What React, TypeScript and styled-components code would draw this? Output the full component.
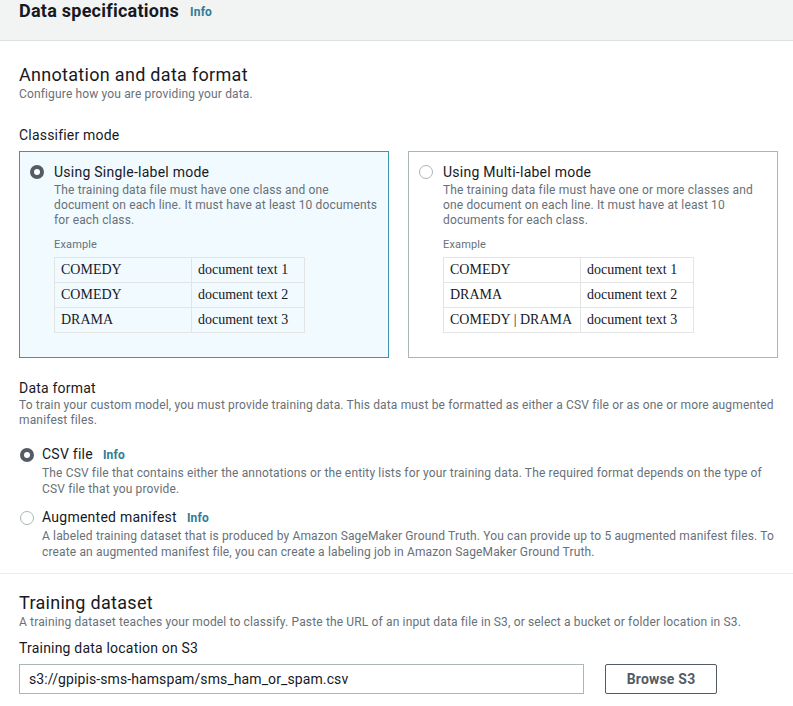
import React from "react";
import styled, { createGlobalStyle } from "styled-components";

const Global = createGlobalStyle`
  html, body { margin: 0; padding: 0; background: #ffffff; }
  body { font-family: Roboto, "Noto Sans", Arial, sans-serif; color: #16191f; }
  * { box-sizing: border-box; }
`;

const Page = styled.div`
  width: 793px;
  min-height: 706px;
  background: #ffffff;
  overflow: hidden;
`;

const Header = styled.header`
  height: 41px;
  background: #f2f3f3;
  border-bottom: 1px solid #dde1e1;
  padding: 0 19px;
  display: flex;
  align-items: flex-start;
  gap: 11px;
`;

const HeaderTitle = styled.h1`
  margin: 0;
  font-size: 18px;
  line-height: 22px;
  font-weight: 700;
  letter-spacing: 0.25px;
  color: #16191f;
`;

const InfoLink = styled.span<{ $size?: number; $top?: number }>`
  font-size: ${(p) => p.$size ?? 12}px;
  font-weight: 700;
  letter-spacing: 0.15px;
  color: #2f7c96;
  position: relative;
  top: ${(p) => p.$top ?? 0}px;
`;

const Body = styled.div`
  padding: 23px 15px 0 19px;
`;

const SectionTitle = styled.h2`
  margin: 0;
  font-size: 18px;
  line-height: 22px;
  font-weight: 400;
  letter-spacing: 0.3px;
  color: #16191f;
`;

const Sub = styled.p`
  margin: 0;
  font-size: 12px;
  line-height: 16px;
  letter-spacing: 0.15px;
  color: #687078;
`;

const FieldLabel = styled.div<{ $mt: number }>`
  margin-top: ${(p) => p.$mt}px;
  font-size: 14px;
  line-height: 20px;
  letter-spacing: 0.2px;
  color: #16191f;
`;

const Tiles = styled.div`
  margin-top: 6px;
  display: grid;
  grid-template-columns: 370px 370px;
  gap: 19px;
`;

const Tile = styled.div<{ $selected?: boolean }>`
  height: 207px;
  border: 1px solid ${(p) => (p.$selected ? "#3b96aa" : "#aab7b8")};
  background: ${(p) => (p.$selected ? "#f1faff" : "#ffffff")};
  padding: 9px 10px 0 10px;
  display: flex;
  gap: 10px;
`;

const Radio = styled.span<{ $checked?: boolean }>`
  flex: none;
  width: 14px;
  height: 14px;
  margin-top: 4px;
  border-radius: 50%;
  background: ${(p) => (p.$checked ? "#545b64" : "#ffffff")};
  border: ${(p) => (p.$checked ? "none" : "1px solid #aab7b8")};
  display: flex;
  align-items: center;
  justify-content: center;
  &::after {
    content: "";
    display: ${(p) => (p.$checked ? "block" : "none")};
    width: 6px;
    height: 6px;
    border-radius: 50%;
    background: #ffffff;
  }
`;

const TileContent = styled.div`
  flex: 1;
  min-width: 0;
  display: flex;
  flex-direction: column;
  align-items: flex-start;
`;

const OptionLabel = styled.div<{ $lh?: number }>`
  font-size: 14px;
  line-height: ${(p) => p.$lh ?? 20}px;
  letter-spacing: 0.25px;
  color: #16191f;
  display: flex;
  align-items: baseline;
  gap: 10px;
`;

const Desc = styled.p<{ $lh?: number }>`
  margin: 0;
  font-size: 12px;
  line-height: ${(p) => p.$lh ?? 15}px;
  letter-spacing: 0.15px;
  color: #687078;
`;

const DescLine = styled.span`
  display: block;
  white-space: nowrap;
`;

const ExampleLabel = styled.div`
  margin-top: 9px;
  font-size: 11px;
  line-height: 16px;
  letter-spacing: 0.15px;
  color: #687078;
`;

const ExampleTable = styled.table`
  margin-top: 4px;
  border-collapse: collapse;
  table-layout: fixed;
  width: 250px;
  font-family: "Liberation Serif", "Times New Roman", serif;
  font-size: 14px;
  color: #16191f;
  td {
    height: 25px;
    padding: 0 6px;
    border: 1px solid #e3e5e5;
    white-space: nowrap;
  }
  td:first-child { width: 137px; }
  td:last-child { width: 113px; }
`;

const Options = styled.div`
  margin-top: 16px;
  display: flex;
  flex-direction: column;
  gap: 10px;
`;

const OptionRow = styled.div`
  display: flex;
  gap: 8px;
  padding-left: 1px;
`;

const Divider = styled.hr`
  margin: 13px 0 0 0;
  border: none;
  border-top: 1px solid #eaeded;
`;

const Body2 = styled.div`
  padding: 18px 15px 0 19px;
`;

const InputRow = styled.div`
  margin-top: 6px;
  display: flex;
  gap: 21px;
`;

const TextInput = styled.div`
  width: 565px;
  height: 30px;
  border: 1px solid #aab7b8;
  padding: 0 9px;
  display: flex;
  align-items: center;
  font-size: 14px;
  letter-spacing: 0.1px;
  color: #16191f;
`;

const Button = styled.button`
  width: 112px;
  height: 30px;
  border: 1px solid #545b64;
  border-radius: 2px;
  background: #ffffff;
  font-family: inherit;
  font-size: 14px;
  font-weight: 700;
  letter-spacing: 0.2px;
  color: #545b64;
  padding: 0;
`;

const singleRows = [
  ["COMEDY", "document text 1"],
  ["COMEDY", "document text 2"],
  ["DRAMA", "document text 3"],
];
const multiRows = [
  ["COMEDY", "document text 1"],
  ["DRAMA", "document text 2"],
  ["COMEDY | DRAMA", "document text 3"],
];

function ModeTile(props: {
  selected?: boolean;
  title: string;
  desc: string[];
  rows: string[][];
}) {
  return (
    <Tile $selected={props.selected}>
      <Radio $checked={props.selected} />
      <TileContent>
        <OptionLabel $lh={22}>{props.title}</OptionLabel>
        <Desc>
          {props.desc.map((line, i) => (
            <DescLine key={i}>{line}</DescLine>
          ))}
        </Desc>
        <ExampleLabel>Example</ExampleLabel>
        <ExampleTable>
          <tbody>
            {props.rows.map((r, i) => (
              <tr key={i}>
                <td>{r[0]}</td>
                <td>{r[1]}</td>
              </tr>
            ))}
          </tbody>
        </ExampleTable>
      </TileContent>
    </Tile>
  );
}

export default function App() {
  return (
    <Page>
      <Global />
      <Header>
        <HeaderTitle>Data specifications</HeaderTitle>
        <InfoLink $size={12} $top={5}>Info</InfoLink>
      </Header>
      <Body>
        <SectionTitle>Annotation and data format</SectionTitle>
        <Sub>Configure how you are providing your data.</Sub>
        <FieldLabel $mt={23}>Classifier mode</FieldLabel>
        <Tiles>
          <ModeTile
            selected
            title="Using Single-label mode"
            desc={[
              "The training data file must have one class and one",
              "document on each line. It must have at least 10 documents",
              "for each class.",
            ]}
            rows={singleRows}
          />
          <ModeTile
            title="Using Multi-label mode"
            desc={[
              "The training data file must have one or more classes and",
              "one document on each line. It must have at least 10",
              "documents for each class.",
            ]}
            rows={multiRows}
          />
        </Tiles>
        <FieldLabel $mt={20}>Data format</FieldLabel>
        <Desc>
          To train your custom model, you must provide training data. This data must be formatted as either a CSV file or as one or more augmented manifest files.
        </Desc>
        <Options>
          <OptionRow>
            <Radio $checked />
            <TileContent>
              <OptionLabel>
                CSV file <InfoLink>Info</InfoLink>
              </OptionLabel>
              <Desc $lh={16}>
                The CSV file that contains either the annotations or the entity lists for your training data. The required format depends on the type of CSV file that you provide.
              </Desc>
            </TileContent>
          </OptionRow>
          <OptionRow>
            <Radio />
            <TileContent>
              <OptionLabel>
                Augmented manifest <InfoLink>Info</InfoLink>
              </OptionLabel>
              <Desc $lh={16}>
                A labeled training dataset that is produced by Amazon SageMaker Ground Truth. You can provide up to 5 augmented manifest files. To create an augmented manifest file, you can create a labeling job in Amazon SageMaker Ground Truth.
              </Desc>
            </TileContent>
          </OptionRow>
        </Options>
      </Body>
      <Divider />
      <Body2>
        <SectionTitle>Training dataset</SectionTitle>
        <Sub>
          A training dataset teaches your model to classify. Paste the URL of an input data file in S3, or select a bucket or folder location in S3.
        </Sub>
        <FieldLabel $mt={8}>Training data location on S3</FieldLabel>
        <InputRow>
          <TextInput>s3://gpipis-sms-hamspam/sms_ham_or_spam.csv</TextInput>
          <Button>Browse S3</Button>
        </InputRow>
      </Body2>
    </Page>
  );
}
